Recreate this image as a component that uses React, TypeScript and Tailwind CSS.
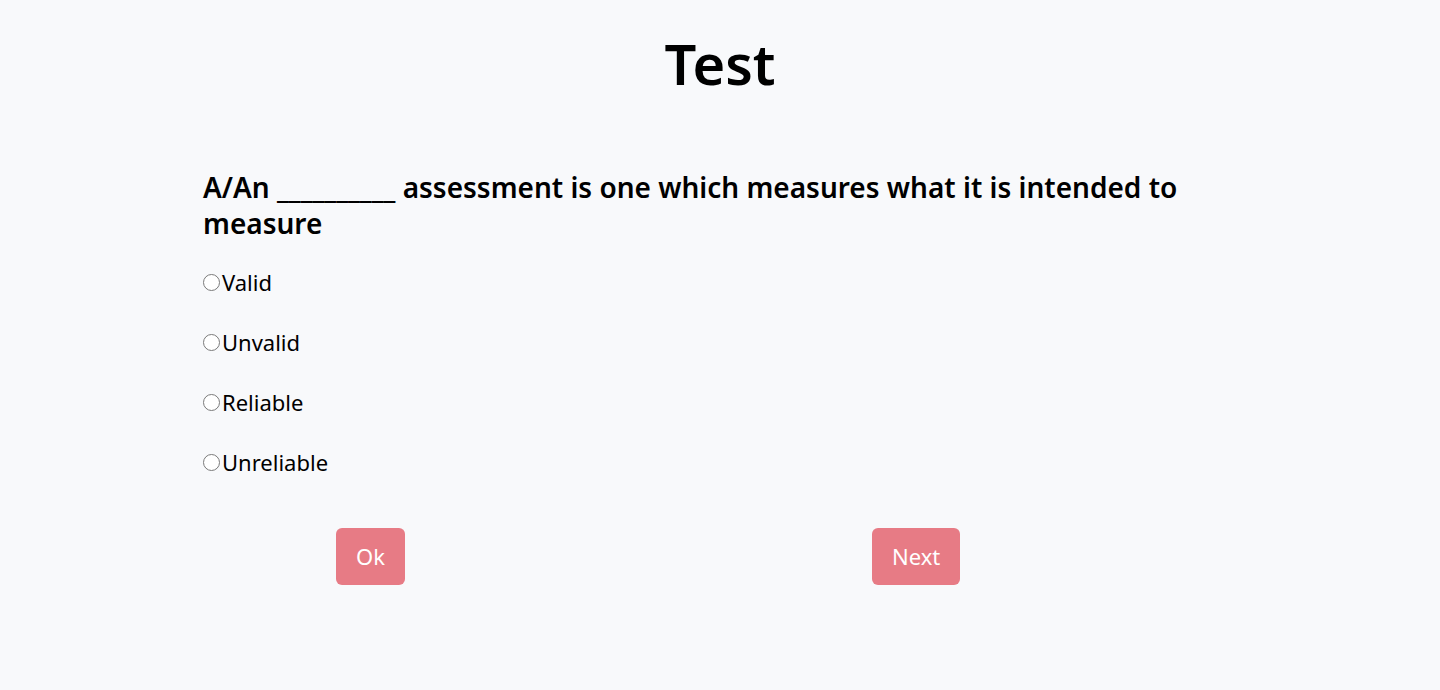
import React, { useState } from 'react';

const OPTIONS = ['Valid', 'Unvalid', 'Reliable', 'Unreliable'];

const App: React.FC = () => {
  const [picked, setPicked] = useState<string | null>(null);

  return (
    <div
      className="min-h-screen bg-[#f8f9fb] text-black"
      style={{ fontFamily: '"Noto Sans", "Open Sans", sans-serif' }}
    >
      {/* Title */}
      <h1 className="pt-[27px] text-center text-[56px] font-semibold leading-[72px]">Test</h1>

      <div className="mx-auto w-[1034px] pt-[70px]">
        {/* Question */}
        <h2 className="text-[28px] font-semibold leading-[36px]">
          A/An __________ assessment is one which measures what it is intended to measure
        </h2>

        {/* Options */}
        <div className="mt-[29px] flex flex-col gap-[36px]">
          {OPTIONS.map((opt) => (
            <label
              key={opt}
              className="flex h-[24px] cursor-pointer items-center text-[22px] leading-[24px]"
              onClick={() => setPicked(opt)}
            >
              <span className="mr-[2px] flex h-[17px] w-[17px] shrink-0 items-center justify-center rounded-full border-[1.5px] border-[#7a7a7a] bg-white">
                {picked === opt && <span className="h-[9px] w-[9px] rounded-full bg-[#0075ff]" />}
              </span>
              {opt}
            </label>
          ))}
        </div>

        {/* Actions */}
        <div className="mt-[54px] flex">
          <button className="ml-[133px] h-[57px] rounded-md bg-[#e77b85] px-5 text-[22px] text-white">
            Ok
          </button>
          <button className="ml-[467px] h-[57px] rounded-md bg-[#e77b85] px-5 text-[22px] text-white">
            Next
          </button>
        </div>
      </div>
    </div>
  );
};

export default App;
